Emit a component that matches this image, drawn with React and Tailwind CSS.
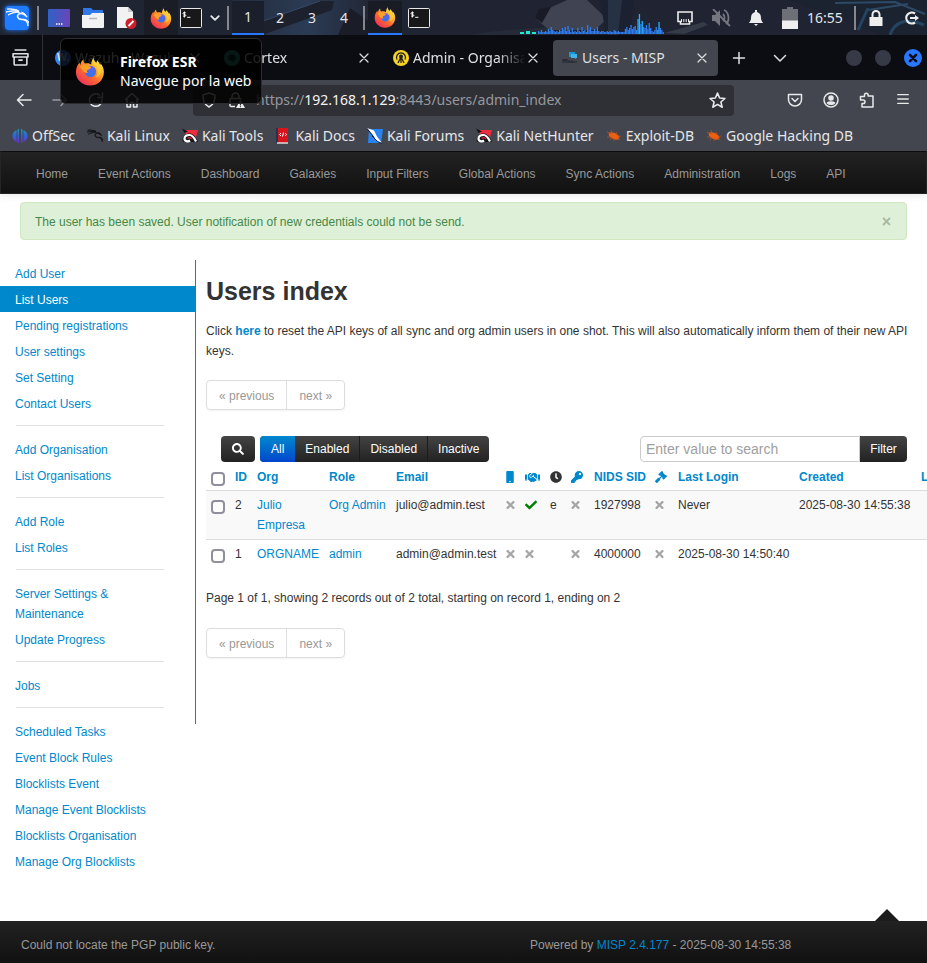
import React from "react";
import { FaMobile, FaHandshake, FaClock, FaKey, FaGavel, FaTimes, FaCheck, FaSearch } from "react-icons/fa";
import { SiKalilinux } from "react-icons/si";

function Firefox({ className }) {
  return (
    <svg viewBox="0 0 32 32" className={className} aria-hidden="true">
      <defs>
        <linearGradient id="ffBody" x1="0.85" y1="0.1" x2="0.2" y2="0.95">
          <stop offset="0" stopColor="#fff04a" />
          <stop offset="0.3" stopColor="#ffb62c" />
          <stop offset="0.6" stopColor="#ff6a2f" />
          <stop offset="1" stopColor="#f0305c" />
        </linearGradient>
        <linearGradient id="ffGlobe" x1="0.3" y1="0" x2="0.7" y2="1">
          <stop offset="0" stopColor="#6a5af0" />
          <stop offset="1" stopColor="#2f78e8" />
        </linearGradient>
      </defs>
      <path fill="url(#ffBody)" d="M20.500 0c-1.600 3 0.300 5.400 2.200 7.200 0.700-1 0.800-2 0.700-2.800 2 1.800 3 3.600 3.500 5.300 0.300-0.800 0.300-1.400 0.200-2 2.600 3 3.700 6 3.700 9.300C30.800 25.800 24 31.500 16 31.500 7.600 31.500 1 25 1 17.300c0-4.800 2-8.300 3.800-10.300 0.200 1.200 0.500 1.800 1 2.500 0.100-2.300 1.500-4.600 3.200-5.700-0.200 2 0.500 3.400 1.600 4.200 3.500-0.800 5.400 0 6.600 1.200 0.200-3.200 1.400-6.500 3.300-8.200z" />
      <circle cx="16.500" cy="16.500" r="6" fill="url(#ffGlobe)" />
      <path fill="#ffa028" d="M5 11.500c3-2.500 6.500-2.300 9-0.800 1.600 0.200 2.700 0.600 3.300 1.200-0.800 1.600-2.300 2.300-4.100 3-1 0.600-0.600 2.600 0.800 3.300-3 0-5-1-6-3-1-1.500-1.500-2.500-3-3.700z" />
      <path fill="#ffcf3a" d="M19 8.500c4.500 2 6.500 5.500 5 10.400-0.400 2-1.300 3.500-2.300 4.300 6-1.600 7.600-8.300 4.500-12.600l-3-3.400z" opacity="0.8" />
    </svg>
  );
}

function Stroke({ children, className = "w-4 h-4", w = 1.5 }) {
  return (
    <svg viewBox="0 0 16 16" className={className} fill="none" stroke="currentColor" strokeWidth={w} strokeLinecap="round" strokeLinejoin="round" aria-hidden="true">
      {children}
    </svg>
  );
}

function Cross({ className = "w-4 h-4" }) {
  return (
    <Stroke className={className} w={1.2}>
      <path d="M4 4l8 8M12 4l-8 8" />
    </Stroke>
  );
}

function Terminal() {
  return (
    <svg viewBox="0 0 22 20" className="h-5 w-[22px]" aria-hidden="true">
      <rect x="0.500" y="0.500" width="21" height="19" rx="1" fill="#181818" stroke="#e8e8e8" />
      <path d="M5.800 5c-1-1-2.800-0.600-2.800 0.500 0 1.200 2.800 0.600 2.800 1.900 0 1.100-1.900 1.300-2.800 0.400M4.400 3.500v6M7.200 9.300h3.200" stroke="#fff" strokeWidth="1" fill="none" />
    </svg>
  );
}

function Dragon({ className, color = "#fff" }) {
  return <SiKalilinux className={className} color={color} stroke={color} strokeWidth="0.9" />;
}

const bars = [2, 1, 3, 1, 1, 2, 1, 4, 2, 6, 3, 2, 1, 2, 1, 3, 2, 5, 3, 6, 2, 7, 3, 1, 5, 1, 2, 1, 5, 2, 1, 6, 2, 3, 1, 8, 3, 6, 2, 2, 4, 2, 6, 2, 1, 2, 2, 1, 1, 2, 1, 2, 1, 1, 3, 2, 1, 2, 1, 1, 1, 1, 4, 6, 3, 5, 8, 4, 6, 7, 3, 14, 19, 9, 12, 6, 5, 8, 4, 10, 5, 2, 1, 3, 6, 3, 11, 5, 3, 1];

function Taskbar() {
  const sep = "h-6 w-[2px] shrink-0 bg-[#85878d]";
  return (
    <header className="relative flex h-[35px] items-center overflow-hidden bg-[#202331] text-sm text-[#e3e5e8]">
      <svg className="absolute inset-0 h-full w-full" viewBox="0 0 927 35" preserveAspectRatio="none" aria-hidden="true">
        <defs>
          <linearGradient id="glow"><stop stopColor="#232c3d" /><stop offset="0.5" stopColor="#2b3b54" /><stop offset="1" stopColor="#202331" /></linearGradient>
        </defs>
        <path d="M0 0h430v35H0z" fill="#1f2532" />
        <path d="M232 0h150v35H232z" fill="url(#glow)" />
        <path d="M246 27l74-26h14l-2 9-70 25h-16z" fill="#1d212d" />
        <path d="M246 27l74-26" stroke="#35496a" />
        <path d="M350 8l38 27h-50z" fill="#1a1d27" />
        <path d="M470 35c30-6 50-5 80-8l10 8z" fill="#262b3a" />
        <path d="M535 18l10-8 22-10h20l20 19-12 11h-46z" fill="#3f4352" />
        <path d="M535 18l4-9 12-2-9 16z" fill="#181b25" />
        <path d="M600 0h34l-4 35h-24z" fill="#1b2130" />
        <path d="M608 0h14l-4 35h-10z" fill="#263144" />
        <path d="M664 33l40-11 4 3-24 9z" fill="#363b48" />
        <path d="M790 0h137v35h-45z" fill="#1b2230" />
        <path d="M835 3l60-1 30 12M868 10l40-6" stroke="#2c4a66" strokeWidth="2" fill="none" />
        <path d="M858 30l10-22M890 35c4-12 14-18 34-10" stroke="#25445f" strokeWidth="3" fill="none" />
      </svg>
      <div className="relative flex flex-1 items-center">
        <span className="flex w-[37px] items-center pl-[5px]">
          <span className="flex h-6 w-6 items-center justify-center rounded-sm bg-[#1f7bff] shadow-[0_0_5px_#1f7bff]">
            <Dragon className="h-[23px] w-[23px]" />
          </span>
        </span>
        <span className={sep} />
        <span className="flex w-10 justify-center">
          <svg viewBox="0 0 22 18" className="h-[18px] w-[22px]" aria-hidden="true">
            <defs><linearGradient id="desk"><stop stopColor="#2f63c8" /><stop offset="1" stopColor="#6a44b8" /></linearGradient></defs>
            <rect width="22" height="18" rx="1" fill="url(#desk)" />
            <path d="M8 15h1.500M10.500 15h1.500M13 15h1.500" stroke="#fff" strokeWidth="1.500" />
          </svg>
        </span>
        <span className="flex w-7 justify-center">
          <svg viewBox="0 0 22 20" className="h-5 w-[22px]" aria-hidden="true">
            <path d="M1 0h8l2 2h10v6H1z" fill="#2f78e8" />
            <path d="M0 7h8l2-2h12v14a1 1 0 0 1-1 1H1a1 1 0 0 1-1-1z" fill="#f2f2f4" />
            <path d="M7 10.500h8" stroke="#b8b8b8" strokeWidth="1.500" />
          </svg>
        </span>
        <span className="flex w-[38px] justify-center">
          <svg viewBox="0 0 22 24" className="h-6 w-[22px]" aria-hidden="true">
            <path d="M2 1h11l5 5v16H2z" fill="#f2f2f2" />
            <path d="M13 1v5h5z" fill="#c9c9c9" />
            <circle cx="16" cy="17.500" r="5.500" fill="#cc1f2a" />
            <path d="M13.500 20l5-5" stroke="#fff" strokeWidth="1.800" />
          </svg>
        </span>
        <span className="-ml-px flex h-[35px] w-[34px] items-center justify-center bg-[#1a1c26]"><Firefox className="h-[22px] w-[22px]" /></span>
        <span className="flex w-6 justify-end"><Terminal /></span>
        <span className="flex w-[25px] justify-center"><Stroke className="h-3 w-3" w={2.5}><path d="M3 5.500l5 5 5-5" /></Stroke></span>
        <span className={sep} />
        <nav aria-label="Workspaces" className="ml-[3px] flex">
          <button className="h-[34px] w-8 border-b-2 border-[#2777ff] bg-[#1a1f2b]">1</button>
          <button className="h-[34px] w-8">2</button>
          <button className="h-[34px] w-8">3</button>
          <button className="h-[34px] w-8">4</button>
        </nav>
        <span className={"ml-[3px] " + sep} />
        <span className="ml-[3px] flex h-[34px] w-[34px] items-center justify-center border-b-2 border-[#2777ff] bg-[#191b25]"><Firefox className="h-[22px] w-[22px]" /></span>
        <span className="ml-1.5"><Terminal /></span>
      </div>
      <svg viewBox="0 0 147 34" className="relative h-[34px] w-[147px] self-start" aria-hidden="true">
        <path d="M0 33h4M12 33h4" stroke="#1de9d0" strokeWidth="2" />
        <path d="M6 32.500h4" stroke="#1de9d0" strokeWidth="3" />
        {bars.map((h, i) => (
          <rect key={i} x={18 + i * 1.4} y={33 - h} width="1.300" height={h + 1} fill={h > 10 ? "#20b4ff" : "#2f7df2"} />
        ))}
      </svg>
      <div className="relative flex items-center">
        <span className="flex w-9 justify-center">
          <svg viewBox="0 0 16 14" className="h-[14px] w-4" aria-hidden="true">
            <path d="M1 1h14v9.500h-2.500V13h-9v-2.500H1z" fill="none" stroke="#eee" strokeWidth="1.600" />
            <path d="M4.500 8v3M6.800 8v3M9.200 8v3M11.500 8v3" stroke="#eee" strokeWidth="1" />
          </svg>
        </span>
        <span className="flex w-9 justify-center text-[#74777f]">
          <svg viewBox="0 0 20 18" className="h-[18px] w-5" fill="none" stroke="currentColor" strokeWidth="1.800" aria-hidden="true">
            <path d="M1 6h3l5-5v16l-5-5H1z" fill="currentColor" stroke="none" />
            <path d="M12 5c2 2 2 5 0 7M13 1c5 2 6 11 2 14M2 0l17 17" />
          </svg>
        </span>
        <span className="flex w-[34px] justify-center">
          <svg viewBox="0 0 14 16" className="h-4 w-[14px]" fill="#eee" aria-hidden="true"><path d="M6 0h2v2c3 1 4 3 4 6 0 2 1 3.500 2 5H0c1-1.500 2-3 2-5 0-3 1-5 4-6zM5 14h4l-2 2z" /></svg>
        </span>
        <span className="flex w-[34px] justify-center">
          <svg viewBox="0 0 16 22" className="h-[22px] w-4" aria-hidden="true"><path d="M5 0h6v2h5v12H0V2h5z" fill="#6e7077" /><path d="M0 13.500h16V22H0z" fill="#efefef" /></svg>
        </span>
        <time className="w-9 text-center">16:55</time>
        <span className={"ml-[11px] " + sep} />
        <span className="flex w-10 justify-center">
          <svg viewBox="0 0 14 16" className="h-4 w-[14px]" aria-hidden="true"><path d="M3.500 7V4.500a3.500 3.500 0 0 1 7 0V7" fill="none" stroke="#eee" strokeWidth="2" /><rect x="0.500" y="7" width="13" height="9" fill="#eee" /></svg>
        </span>
        <span className="flex w-[31px] justify-center">
          <svg viewBox="0 0 16 14" className="h-[14px] w-4" fill="none" stroke="#eee" strokeWidth="2.200" aria-hidden="true"><path d="M11 2.500A5.500 5.500 0 1 0 11 11.500M6 7h6" /><path d="M11 4l4 3-4 3z" fill="#eee" stroke="none" /></svg>
        </span>
      </div>
    </header>
  );
}

function Tab({ icon, label, active }) {
  return (
    <div className={"flex h-9 w-[165px] shrink-0 items-center rounded pl-[9px] pr-2 " + (active ? "bg-[#43464f]" : "")}>
      <span className="w-5 shrink-0">{icon}</span>
      <span className={"flex-1 overflow-hidden whitespace-nowrap " + (active ? "" : "[mask-image:linear-gradient(to_right,black_75%,transparent)]")}>{label}</span>
      <button aria-label={"Close " + label}><Cross /></button>
    </div>
  );
}

function TabStrip() {
  return (
    <div className="flex h-[45px] items-center bg-[#0c0d12] text-sm text-[#dfe0e3]">
      <button aria-label="View" className="flex h-full w-[43px] items-center justify-center border-r border-[#303138] pr-px">
        <Stroke className="h-[17px] w-[17px]" w={1.5}><path d="M3 1h10M1 4.500h14v3H1zM2 7.500v6.500a1 1 0 0 0 1 1h10a1 1 0 0 0 1-1V7.500M6.500 10.500h3" /></Stroke>
      </button>
      <div className="ml-[3px] flex gap-1">
        <Tab label="Wazuh - Wazuh" icon={<span className="flex h-4 w-4 items-center justify-center rounded-full bg-[#3585f9] text-[10px] font-bold">W.</span>} />
        <Tab label="Cortex" icon={<svg viewBox="0 0 16 16" className="h-4 w-4" aria-hidden="true"><circle cx="8" cy="8" r="8" fill="#2f9c8c" /><path d="M4 8c0-5 8-5 8 0 0 2-2 2-3 4-1-2-5-1-5-4z" fill="#0d3c38" /></svg>} />
        <Tab
          label="Admin - Organisa"
          icon={
            <svg viewBox="0 0 16 16" className="h-4 w-4" aria-hidden="true">
              <circle cx="8" cy="8" r="8" fill="#f5d327" />
              <path d="M4 9.500a4.500 4.500 0 1 1 8 0M5 13l3-6 3 6M8 8v5" fill="none" stroke="#222" strokeWidth="1.300" />
              <circle cx="8" cy="6.500" r="2" fill="#222" />
            </svg>
          }
        />
        <Tab
          active
          label="Users - MISP"
          icon={
            <svg viewBox="0 0 16 16" className="h-4 w-4" aria-hidden="true">
              <path d="M7 2h6v5h-3l-1 1V7H7z" fill="#1599d6" /><path d="M9 4h6v4h-1v1l-1-1H9z" fill="#3eb4ea" />
              <path d="M1 9v4M3 9v4M5 9v4M7 10v3M10 10v3M1 10h4M7 12h8" stroke="#22252b" strokeWidth="1" />
            </svg>
          }
        />
      </div>
      <button aria-label="New tab" className="ml-[13px]"><Stroke><path d="M8 2.500v11M2.500 8h11" /></Stroke></button>
      <button aria-label="List all tabs" className="ml-[25px]"><Stroke><path d="M2.500 5.500L8 11l5.500-5.500" /></Stroke></button>
      <div className="ml-auto mr-[5px] flex items-center gap-[13px]">
        <button aria-label="Minimize" className="h-4 w-4 rounded-full bg-[#363946]" />
        <button aria-label="Maximize" className="h-4 w-4 rounded-full bg-[#363946]" />
        <button aria-label="Close window" className="flex h-[18px] w-[18px] items-center justify-center rounded-full bg-[#2777ff] text-[#0c0d12]"><Stroke className="h-[14px] w-[14px]" w={3}><path d="M4.500 4.500l7 7M11.500 4.500l-7 7" /></Stroke></button>
      </div>
    </div>
  );
}

function AddressBar() {
  const cell = "flex w-9 shrink-0 justify-center";
  return (
    <div className="flex h-10 items-center bg-[#43464f] pl-1.5 text-sm text-[#e8e9eb]">
      <button aria-label="Back" className={cell}><Stroke><path d="M15 8H1.500M7 2.500L1.500 8 7 13.500" /></Stroke></button>
      <button aria-label="Forward" className={cell + " text-[#9a9ca2]"}><Stroke><path d="M1 8h13.500M9 2.500L14.500 8 9 13.500" /></Stroke></button>
      <button aria-label="Reload" className={cell}><Stroke><path d="M14 7.500A6.300 6.300 0 1 1 11.500 3M14.500 1v4.500H10" /></Stroke></button>
      <button aria-label="Home" className={cell}><Stroke><path d="M1.500 7.500L8 1.500l6.500 6M3 7v8h3.500v-4.500h3V15H13V7" /></Stroke></button>
      <div className="ml-[43px] flex h-[31px] min-w-0 flex-1 items-center rounded bg-[#2f3036] px-2">
        <Stroke><path d="M8 1l6 2c0 6-1 9.500-6 12C3 12.500 2 9 2 3z" /></Stroke>
        <span className="ml-[11px] w-5">
          <svg viewBox="0 0 18 16" className="h-4 w-[18px]" fill="none" stroke="currentColor" strokeWidth="1.500" aria-hidden="true">
            <path d="M4 6.500V4.500a3.500 3.500 0 0 1 7 0v2M7 14.500H3a1 1 0 0 1-1-1V7.500a1 1 0 0 1 1-1h9a1 1 0 0 1 1 1" />
            <path d="M12.500 8l4.500 8H8z" fill="#eee" stroke="none" /><path d="M12.500 10.500v3M12.500 14.200v1" stroke="#2f3036" strokeWidth="1.200" />
          </svg>
        </span>
        <span className="ml-2 flex-1 whitespace-nowrap text-[#96989e]">https://<span className="text-[#f4f4f5]">192.168.1.129</span>:8443/users/admin_index</span>
        <Stroke className="h-[17px] w-[17px]"><path d="M8 1l2 4.600 5 0.500-3.800 3.300 1.200 4.900L8 11.700l-4.400 2.600 1.200-4.900L1 6.100l5-0.500z" /></Stroke>
      </div>
      <div className="ml-[43px] mr-1.5 flex">
        <button aria-label="Pocket" className={cell}><Stroke><path d="M1.500 2.500h13v5a6.500 6.500 0 0 1-13 0zM5 6.500l3 3 3-3" /></Stroke></button>
        <button aria-label="Account" className={cell}><Stroke><circle cx="8" cy="8" r="7" /><circle cx="8" cy="6" r="2" fill="currentColor" /><path d="M4.500 11c1-1.500 6-1.500 7 0-1.500 1.800-5.500 1.800-7 0z" fill="currentColor" /></Stroke></button>
        <button aria-label="Extensions" className={cell}><Stroke><path d="M5.500 4V3a1.800 1.800 0 0 1 3.600 0v1H14v11H3v-3.500h1.200a1.800 1.800 0 0 0 0-3.600H1.500V4.500h4" /></Stroke></button>
        <button aria-label="Menu" className={cell}><Stroke className="h-[14px] w-[14px]"><path d="M2 3h12M2 8h12M2 13h12" /></Stroke></button>
      </div>
    </div>
  );
}

const OffSec = () => (
  <svg viewBox="0 0 16 16" className="h-4 w-4" aria-hidden="true">
    <defs><linearGradient id="off" x2="0" y2="1"><stop stopColor="#1d9fb4" /><stop offset="0.5" stopColor="#2f62d8" /><stop offset="1" stopColor="#7a2bd8" /></linearGradient></defs>
    <path fill="url(#off)" d="M7 0.500v15L5.500 14V2zM9 0.500v15l1.500-1.500V2zM4.500 2v12C-1 11-1 5 4.500 2zM11.500 2v12c5.500-3 5.500-9 0-12z" />
  </svg>
);
const Magnet = () => (
  <svg viewBox="0 0 16 16" className="h-4 w-4" aria-hidden="true">
    <path d="M4 2h12l-3 11H2z" fill="#ea2c3c" />
    <path d="M0 0.500l6 3-3.500 1.500z" fill="#131316" />
    <path d="M1 14c-2-5 3-9 7-8.500 4 0.500 6 4 8 8.500z" fill="#17171a" />
    <path d="M8 12.500c-2 1.500-5.500 0.800-5.500-1.700C2.500 8.200 5 7 7.500 7c3.500 0 5 3.500 6.500 6.500" fill="none" stroke="#fff" strokeWidth="2.200" />
    <path d="M5.500 10.500c1-1.200 3.500-1.200 4.500 0.500" fill="none" stroke="#c02434" strokeWidth="1.500" />
  </svg>
);
const Docs = () => (
  <svg viewBox="0 0 16 16" className="h-4 w-4" aria-hidden="true">
    <path d="M1 0h12v15H1z" fill="#d8151c" /><path d="M1 0h2v15H1z" fill="#1c3550" /><path d="M2 15h11" stroke="#ddd" strokeWidth="1.500" />
    <path d="M6 5L4.500 6.500 6 8M10 5l1.500 1.500L10 8M8.500 4.500l-1 4" stroke="#fff" fill="none" />
  </svg>
);
const Forums = () => (
  <svg viewBox="0 0 16 16" className="h-4 w-4" aria-hidden="true">
    <path d="M2 1h14l-2 14H1z" fill="#2784f5" />
    <path d="M0 0l7 2.500 3 6 5 6.500-6-3-3-5z" fill="#fff" />
    <path d="M0 0.500l7 9M5 8l6 6 4 1.500" stroke="#15202b" strokeWidth="1" fill="none" />
  </svg>
);
const Bug = () => (
  <svg viewBox="0 0 16 16" className="h-4 w-4" aria-hidden="true">
    <ellipse cx="8" cy="8" rx="5.800" ry="3" transform="rotate(25 8 8)" fill="#ee5f10" />
    <path d="M1 4l4 2M5 2l1 4M10 4l1 3M1 9l4 0M4 12l2-3M8 13v-3M15 8l-3 1M14 12l-3-2" stroke="#b0542a" strokeWidth="0.800" />
  </svg>
);

const bookmarks = [
  ["OffSec", <OffSec />],
  ["Kali Linux", <Dragon className="h-4 w-4" color="#121315" />],
  ["Kali Tools", <Magnet />],
  ["Kali Docs", <Docs />],
  ["Kali Forums", <Forums />],
  ["Kali NetHunter", <Magnet />],
  ["Exploit-DB", <Bug />],
  ["Google Hacking DB", <Bug />],
];

function Bookmarks() {
  return (
    <nav aria-label="Bookmarks" className="flex h-[31px] items-center gap-3 whitespace-nowrap bg-[#43464f] px-3 text-sm text-[#e6e7e9]">
      {bookmarks.map(([label, icon]) => (
        <a key={label} href="#" className="flex items-center gap-1"><span className="h-4 w-4">{icon}</span>{label}</a>
      ))}
    </nav>
  );
}

const menu = ["Home", "Event Actions", "Dashboard", "Galaxies", "Input Filters", "Global Actions", "Sync Actions", "Administration", "Logs", "API"];
const side = [
  ["Add User", "List Users", "Pending registrations", "User settings", "Set Setting", "Contact Users"],
  ["Add Organisation", "List Organisations"],
  ["Add Role", "List Roles"],
  ["Server Settings & Maintenance", "Update Progress"],
  ["Jobs"],
  ["Scheduled Tasks", "Event Block Rules", "Blocklists Event", "Manage Event Blocklists", "Blocklists Organisation", "Manage Org Blocklists"],
];

function Sidebar() {
  return (
    <aside className="w-[195px] shrink-0">
      {side.map((group, g) => (
        <React.Fragment key={g}>
          {g > 0 && <hr className="mt-[9px] mb-[10px] ml-4 mr-[31px] border-[#e0e0e0]" />}
          <ul>
            {group.map((t) => (
              <li key={t}>
                <a href="#" className={"block pt-1 pb-0.5 pl-[15px] pr-[31px] " + (t === "List Users" ? "bg-[#0088cc] text-white" : "text-[#0088cc]")}>{t}</a>
              </li>
            ))}
          </ul>
        </React.Fragment>
      ))}
    </aside>
  );
}

function Pager() {
  return (
    <div className="my-5 inline-flex h-[30px] rounded border border-[#ddd] text-[#999] shadow-xs">
      <button disabled className="border-r border-[#ddd] px-3 pt-0.5">« previous</button>
      <button disabled className="px-3 pt-0.5">next »</button>
    </div>
  );
}

const No = () => <FaTimes className="h-3 w-[9px] text-[#a5a5a5]" aria-label="No" />;
const box = "block h-[14px] w-[14px] appearance-none rounded-sm border-2 border-[#8f8f9d] bg-white";
const cols = [24, 22, 72, 67, 110, 19, 25, 21, 23, 61, 23, 121, 122, 80];

function UsersTable() {
  const ic = "flex h-5 items-center";
  const rows = [
    ["2", "Julio Empresa", "Org Admin", "julio@admin.test", <FaCheck className="h-3 w-3 text-[#008000]" aria-label="Yes" />, "e", "1927998", "Never", "2025-08-30 14:55:38"],
    ["1", "ORGNAME", "admin", "admin@admin.test", <No />, "", "4000000", "2025-08-30 14:50:40", ""],
  ];
  const cell = "px-[5px] py-1 align-top";
  return (
    <div className="overflow-hidden">
      <table className="w-[790px] table-fixed border-collapse text-left">
        <colgroup>{cols.map((w, i) => <col key={i} style={{ width: w }} />)}</colgroup>
        <thead className="text-[#0088cc]">
          <tr className="[&>th]:whitespace-nowrap [&>th]:px-[5px] [&>th]:pt-[5px] [&>th]:pb-[3px] [&>th]:align-top">
            <th><input type="checkbox" aria-label="Select all users" className={box + " mt-[5px]"} /></th>
            <th>ID</th><th>Org</th><th>Role</th><th>Email</th>
            <th aria-label="TOTP"><span className={ic}><FaMobile className="h-3 w-2" /></span></th>
            <th aria-label="Contact alert"><span className={ic}><FaHandshake className="h-[13px] w-[15px] shrink-0" /></span></th>
            <th aria-label="Periodic notification"><span className={ic}><FaClock className="h-3 w-3 shrink-0 text-[#333]" /></span></th>
            <th aria-label="PGP key"><span className={ic}><FaKey className="h-3 w-3" /></span></th>
            <th>NIDS SID</th>
            <th aria-label="Terms"><span className={ic}><FaGavel className="h-3 w-3" /></span></th>
            <th>Last Login</th><th>Created</th><th>L</th>
          </tr>
        </thead>
        <tbody>
          {rows.map((r, i) => (
            <tr key={r[0]} className={"border-t border-[#ddd] " + (i === 0 ? "bg-[#f9f9f9]" : "")}>
              <td className={cell}><input type="checkbox" aria-label={"Select " + r[3]} className={box + " mt-[5px]"} /></td>
              <td className={cell}>{r[0]}</td>
              <td className={cell}><a href="#" className="text-[#0088cc]">{r[1]}</a></td>
              <td className={cell + " whitespace-nowrap"}><a href="#" className="text-[#0088cc]">{r[2]}</a></td>
              <td className={cell + " whitespace-nowrap"}>{r[3]}</td>
              <td className={cell}><span className={ic}><No /></span></td>
              <td className={cell}><span className={ic}>{r[4]}</span></td>
              <td className={cell}>{r[5]}</td>
              <td className={cell}><span className={ic}><No /></span></td>
              <td className={cell}>{r[6]}</td>
              <td className={cell}><span className={ic}><No /></span></td>
              <td className={cell + " whitespace-nowrap"}>{r[7]}</td>
              <td className={cell + " whitespace-nowrap"}>{r[8]}</td>
              <td className={cell} />
            </tr>
          ))}
        </tbody>
      </table>
    </div>
  );
}

function Toolbar() {
  const btn = "border-r border-[#1c1c1c] px-[10px] last:border-r-0";
  return (
    <div className="mt-1.5 mr-5 ml-[15px] flex h-[26px] text-white">
      <button aria-label="Search" className="flex w-[34px] items-center justify-center rounded bg-linear-to-b from-[#444] to-[#222]"><FaSearch className="h-3 w-3" /></button>
      <div className="ml-[5px] flex overflow-hidden rounded bg-linear-to-b from-[#444] to-[#222]">
        <button className="bg-linear-to-b from-[#0088cc] to-[#0044cc] px-[11px]">All</button>
        <button className={btn}>Enabled</button>
        <button className={btn}>Disabled</button>
        <button className={btn}>Inactive</button>
      </div>
      <form className="ml-auto flex" onSubmit={(e) => e.preventDefault()}>
        <input aria-label="Enter value to search" placeholder="Enter value to search" className="w-[220px] rounded-l border border-[#ccc] px-[5px] text-sm text-[#555] placeholder:text-[#a0a0a0]" />
        <button className="w-[47px] rounded-r bg-linear-to-b from-[#444] to-[#222]">Filter</button>
      </form>
    </div>
  );
}

export default function App() {
  return (
    <div className="flex min-h-screen flex-col overflow-hidden bg-white font-['Noto_Sans',sans-serif]">
      <div className="relative">
        <Taskbar />
        <TabStrip />
        <AddressBar />
        <Bookmarks />
        <div role="tooltip" className="absolute left-[60px] top-[38px] flex h-[66px] w-[202px] items-center rounded-md border border-[#2c2d31] bg-black/85 pl-[14px] text-sm leading-[19px] text-white">
          <Firefox className="h-[30px] w-[30px]" />
          <p className="ml-[15px] whitespace-nowrap"><strong className="block">Firefox ESR</strong>Navegue por la web</p>
        </div>
      </div>
      <div className="flex flex-1 flex-col font-['Liberation_Sans',Arial,sans-serif] text-xs leading-5 text-[#333]">
        <nav aria-label="Main" className="flex h-[43px] items-center gap-[30px] whitespace-nowrap border border-[#252525] border-t-[#0c0c0c] bg-linear-to-b from-[#222] to-[#111] px-[35px] pt-0.5 text-[#999] shadow-[0_1px_8px_rgba(0,0,0,0.1)]">
          {menu.map((m) => <a key={m} href="#">{m}</a>)}
        </nav>
        <div role="alert" className="mx-5 mt-2 flex h-[38px] items-center justify-between rounded border border-[#d0e6be] bg-[#dff0d8] px-[14px] pt-0.5 text-[#468847]">
          The user has been saved. User notification of new credentials could not be send.
          <button aria-label="Dismiss" className="mr-px text-base font-bold text-[#a7b7a2]">×</button>
        </div>
        <div className="mt-5 flex items-start">
          <Sidebar />
          <main className="min-w-0 flex-1 border-l border-[#666] pb-[46px] pl-[10px]">
            <h1 className="mt-[11px] mb-[10px] text-[25px] font-bold leading-10">Users index</h1>
            <p>Click <a href="#" className="font-bold text-[#0088cc]">here</a> to reset the API keys of all sync and org admin users in one shot. This will also automatically inform them of their new API keys.</p>
            <div className="-mt-px flex"><Pager /></div>
            <Toolbar />
            <UsersTable />
            <p className="mt-5">Page 1 of 1, showing 2 records out of 2 total, starting on record 1, ending on 2</p>
            <div className="-mb-5 flex pb-5"><Pager /></div>
          </main>
        </div>
        <footer className="relative mt-auto flex h-[42px] items-center bg-linear-to-b from-[#222] to-[#111] pl-[21px] pt-[5px] text-[#999]">
          <span className="absolute -top-3 right-7 h-3 w-6 bg-[#1c1c1c] [clip-path:polygon(50%_0,100%_100%,0_100%)]" />
          <p className="w-[509px]">Could not locate the PGP public key.</p>
          <p>Powered by <a href="#" className="text-[#0088cc]">MISP 2.4.177</a> - 2025-08-30 14:55:38</p>
        </footer>
      </div>
    </div>
  );
}
